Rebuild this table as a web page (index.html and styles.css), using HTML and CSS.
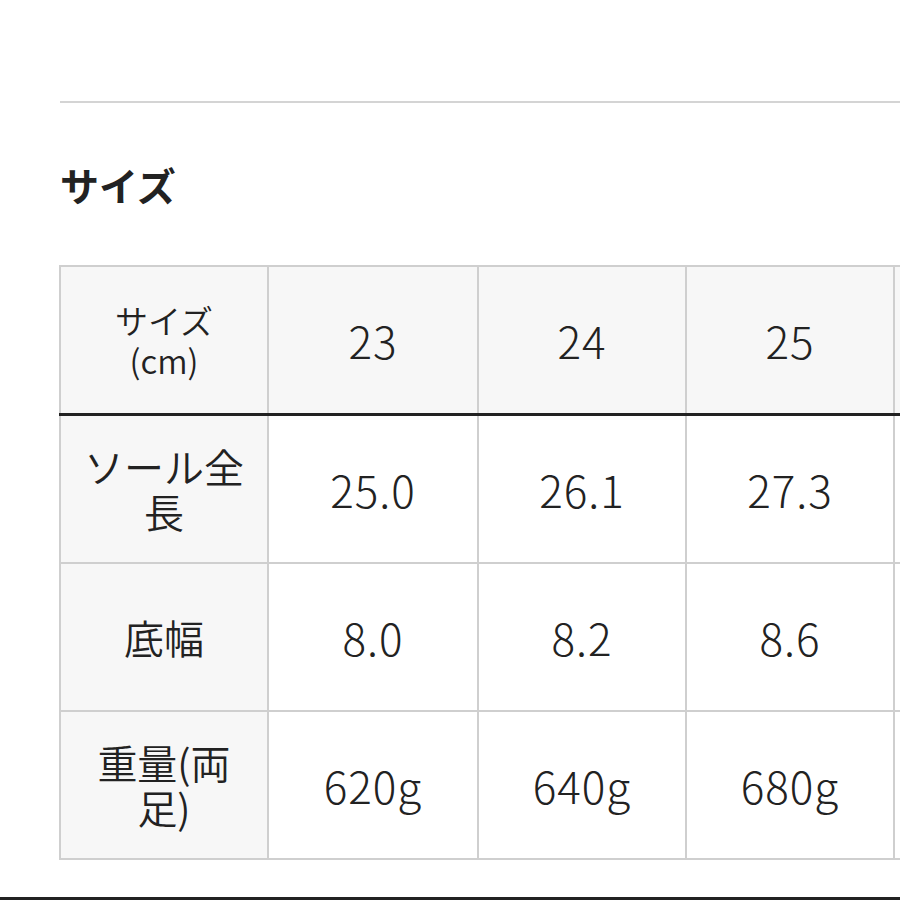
FILE: index.html
```html
<!DOCTYPE html>
<html lang="ja">
<head>
<meta charset="utf-8">
<link rel="stylesheet" href="styles.css">
</head>
<body>
<div class="page">
  <div class="rule"></div>
  <h2 class="title">サイズ</h2>
  <div class="table-wrap">
    <table class="size-table">
      <colgroup>
        <col class="c1"><col class="c2"><col class="c"><col class="c"><col class="c">
      </colgroup>
      <thead>
        <tr>
          <th class="label head-label">サイズ<br>(cm)</th>
          <th class="num">23</th>
          <th class="num">24</th>
          <th class="num">25</th>
          <th class="num"></th>
        </tr>
      </thead>
      <tbody>
        <tr>
          <th class="label">ソール全長</th>
          <td class="num">25.0</td>
          <td class="num">26.1</td>
          <td class="num">27.3</td>
          <td class="num"></td>
        </tr>
        <tr>
          <th class="label">底幅</th>
          <td class="num">8.0</td>
          <td class="num">8.2</td>
          <td class="num">8.6</td>
          <td class="num"></td>
        </tr>
        <tr>
          <th class="label">重量(両足)</th>
          <td class="num">620g</td>
          <td class="num">640g</td>
          <td class="num">680g</td>
          <td class="num"></td>
        </tr>
      </tbody>
    </table>
  </div>
  <div class="bottom-rule"></div>
</div>
</body>
</html>
```
FILE: styles.css
```css
html, body {
  margin: 0;
  padding: 0;
  background: #fff;
}
.page {
  width: 900px;
  height: 900px;
  overflow: hidden;
  padding-top: 101px;
  box-sizing: border-box;
  font-family: "Noto Sans CJK JP", "Noto Sans", sans-serif;
  color: #222;
}
.rule {
  margin-left: 60px;
  height: 2px;
  background: #d4d4d4;
}
.title {
  margin: 57px 0 0 60px;
  font-size: 39px;
  line-height: 48px;
  font-weight: 700;
  color: #222;
}
.table-wrap {
  margin: 57px 0 0 59px;
  width: 841px;
  overflow: hidden;
}
.size-table {
  border-collapse: collapse;
  table-layout: fixed;
  width: 1042px;
}
.size-table col.c1 {
  width: 208px;
}
.size-table col.c2 {
  width: 210px;
}
.size-table col.c {
  width: 208px;
}
.size-table th,
.size-table td {
  border: 2px solid #cfcfcf;
  height: 146px;
  padding: 0 14px;
  text-align: center;
  vertical-align: middle;
  font-weight: 400;
  color: #222;
  background: #fff;
}
.size-table thead th {
  background: #f7f7f7;
  border-bottom: 3px solid #222;
}
.size-table .label {
  background: #f7f7f7;
  font-size: 40px;
  line-height: 45px;
  font-weight: 350;
}
.size-table .head-label {
  font-size: 33px;
  line-height: 40px;
}
.size-table .num {
  font-size: 44px;
  line-height: 50px;
  font-weight: 300;
  letter-spacing: 1px;
}
.bottom-rule {
  margin-top: 37px;
  height: 3px;
  background: #222;
}
```
